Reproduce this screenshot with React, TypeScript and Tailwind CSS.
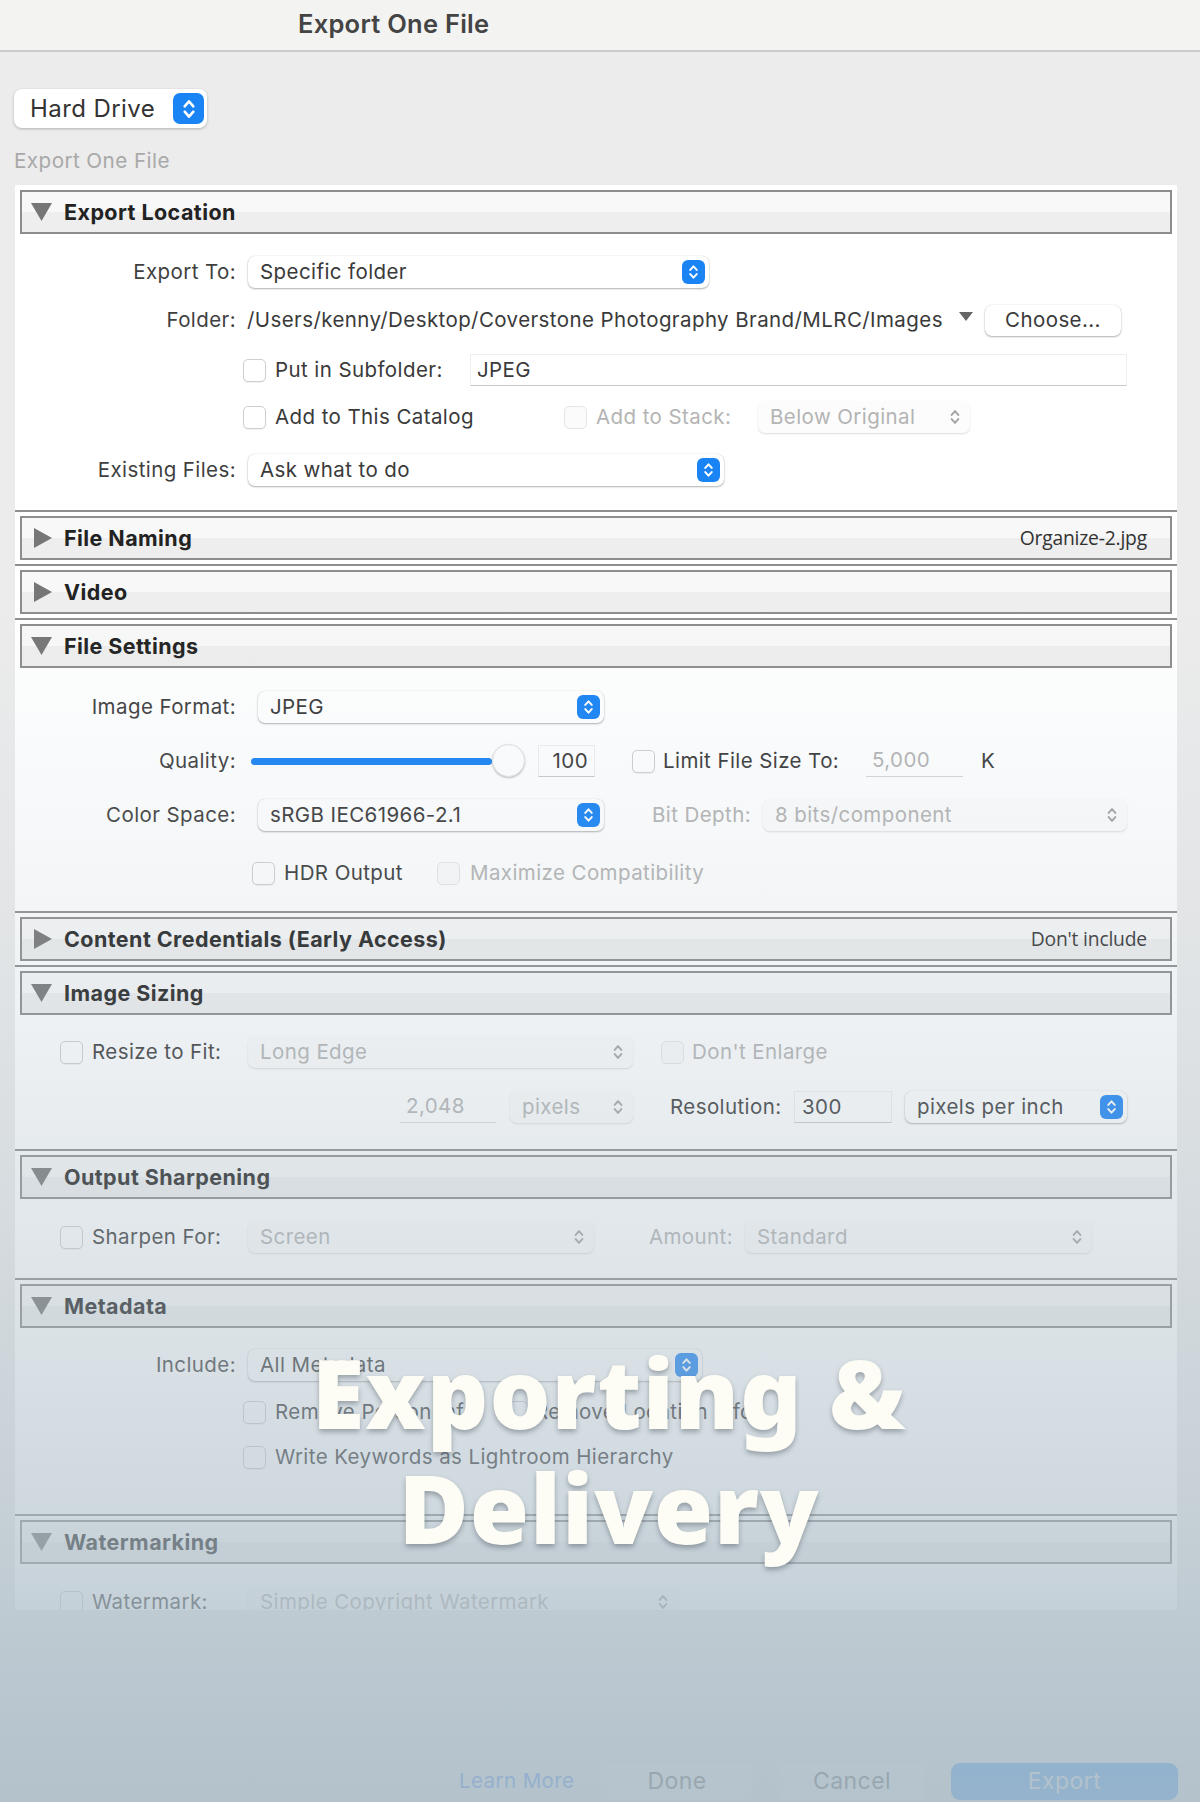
import type { ReactNode } from 'react';

const ui = "font-['Inter','Liberation_Sans',sans-serif]";

function Updown({ className }: { className: string }) {
  return (
    <svg viewBox="0 0 16 24" fill="none" stroke="currentColor" strokeWidth="2.4" strokeLinecap="round" strokeLinejoin="round" className={className}>
      <path d="M4 9.5 8 5l4 4.5" />
      <path d="M4 14.5 8 19l4-4.5" />
    </svg>
  );
}

function Popup({ className, text, off }: { className: string; text: string; off?: boolean }) {
  return (
    <div className={`relative flex h-[32px] shrink-0 items-center rounded-[7px] pl-[12px] ${off ? 'bg-[#fcfcfc] text-[#b4b4b4] shadow-[0_1px_2px_rgba(0,0,0,0.14)]' : 'bg-white text-[#3a3a3a] shadow-[0_1px_2px_rgba(0,0,0,0.3),0_0_1px_rgba(0,0,0,0.2)]'} ${className}`}>
      <span className="whitespace-nowrap">{text}</span>
      {off ? (
        <Updown className="absolute right-[8px] top-[6px] h-[20px] w-[14px] text-[#a4a4a4]" />
      ) : (
        <span className="absolute right-[4px] top-[4px] flex h-[24px] w-[23px] items-center justify-center rounded-[6px] bg-[#1a84f5] text-white">
          <Updown className="h-[20px] w-[13px]" />
        </span>
      )}
    </div>
  );
}

function Check({ className = '', off }: { className?: string; off?: boolean }) {
  return <span className={`block h-[23px] w-[23px] shrink-0 rounded-[5px] border ${off ? 'border-[#e6e6e6] bg-[#fbfbfb]' : 'border-[#cfcfcf] bg-white shadow-[0_1px_1px_rgba(0,0,0,0.06)]'} ${className}`} />;
}

function Label({ className, children }: { className: string; children: ReactNode }) {
  return <span className={`block shrink-0 whitespace-nowrap text-right text-[#3f3f3f] ${className}`}>{children}</span>;
}

function Header({ open, title, note }: { open?: boolean; title: string; note?: string }) {
  return (
    <div className="mx-[5px] flex h-[44px] items-center justify-between border-2 border-[#8d8d8d] bg-[linear-gradient(#f8f8f8_50%,#eeeeee_50%)] pr-[23px]">
      <div className="flex items-center">
        {open ? (
          <svg viewBox="0 0 21 18" className="ml-[9px] h-[18px] w-[21px] fill-[#767676]"><path d="M0 0h21L10.5 18z" /></svg>
        ) : (
          <svg viewBox="0 0 18 20" className="ml-[12px] h-[20px] w-[18px] fill-[#767676]"><path d="M0 0l18 10L0 20z" /></svg>
        )}
        <span className="ml-[12px] text-[21.5px] font-bold tracking-[0.02em] text-[#222]">{title}</span>
      </div>
      {note && <span className="font-['Open_Sans',sans-serif] text-[19.3px] tracking-[-0.01em] text-[#333]">{note}</span>}
    </div>
  );
}

function Sep({ className = '' }: { className?: string }) {
  return <div className={`mb-[4px] h-[2px] bg-[#8f8f8f] ${className}`} />;
}

export default function App() {
  return (
    <div className={`relative flex h-[1802px] w-[1200px] flex-col overflow-hidden bg-[#ececec] text-[20.5px] tracking-[0.02em] ${ui}`}>
      <div className="h-[52px] shrink-0 border-b-2 border-[#cbcbcb] bg-[#f3f3f2] pl-[298px] pt-[9px] text-[25.5px] font-semibold leading-[30px] tracking-[0.01em] text-[#444]">
        Export One File
      </div>

      <div className="ml-[14px] mt-[37px] flex h-[39px] w-[193px] items-center justify-between rounded-[8px] bg-white pl-[16px] pr-[3px] text-[24px] text-[#333] shadow-[0_1px_3px_rgba(0,0,0,0.25)]">
        <span>Hard Drive</span>
        <span className="flex h-[31px] w-[31px] items-center justify-center rounded-[7px] bg-[#1a84f5] text-white">
          <Updown className="h-[26px] w-[18px]" />
        </span>
      </div>

      <div className="ml-[14px] mt-[20px] h-[26px] text-[20.7px] leading-[26px] text-[#a9a9a9]">Export One File</div>

      <div className="ml-[15px] mt-[11px] h-[1425px] w-[1162px] shrink-0 overflow-hidden bg-white pt-[5px]">
        {/* Export Location */}
        <Header open title="Export Location" />
        <div className="mt-[22px] flex h-[32px] items-center">
          <Label className="w-[221px]">Export To:</Label>
          <Popup className="ml-[12px] w-[461px]" text="Specific folder" />
        </div>
        <div className="mt-[16px] flex h-[32px] items-center">
          <Label className="w-[221px]">Folder:</Label>
          <span className="ml-[11px] w-[694px] shrink-0 whitespace-nowrap text-[#3a3a3a]">/Users/kenny/Desktop/Coverstone Photography Brand/MLRC/Images</span>
          <svg viewBox="0 0 14 9" className="mb-[8px] ml-[18px] h-[9px] w-[14px] fill-[#666]"><path d="M0 0h14L7 9z" /></svg>
          <div className="ml-[12px] flex h-[31px] w-[136px] items-center justify-center rounded-[7px] bg-white text-[#3a3a3a] shadow-[0_1px_2px_rgba(0,0,0,0.3),0_0_1px_rgba(0,0,0,0.2)]">Choose...</div>
        </div>
        <div className="mt-[18px] flex h-[32px] items-center">
          <Check className="ml-[228px]" />
          <span className="ml-[9px] w-[195px] shrink-0 text-[#3a3a3a]">Put in Subfolder:</span>
          <div className="flex h-[32px] w-[657px] items-center border border-[#eeeeee] border-b-[#c9c9c9] pl-[6px] text-[#3a3a3a]">JPEG</div>
        </div>
        <div className="mt-[15px] flex h-[32px] items-center">
          <Check className="ml-[228px]" />
          <span className="ml-[9px] w-[289px] shrink-0 text-[#3a3a3a]">Add to This Catalog</span>
          <Check off />
          <span className="ml-[9px] w-[162px] shrink-0 text-[#b4b4b4]">Add to Stack:</span>
          <Popup off className="w-[212px]" text="Below Original" />
        </div>
        <div className="mt-[21px] flex h-[32px] items-center">
          <Label className="w-[221px]">Existing Files:</Label>
          <Popup className="ml-[12px] w-[476px]" text="Ask what to do" />
        </div>
        <Sep className="mt-[24px]" />

        <Header title="File Naming" note="Organize-2.jpg" />
        <Sep className="mt-[4px]" />
        <Header title="Video" />
        <Sep className="mt-[4px]" />

        {/* File Settings */}
        <Header open title="File Settings" />
        <div className="mt-[23px] flex h-[32px] items-center">
          <Label className="w-[221px]">Image Format:</Label>
          <Popup className="ml-[22px] w-[346px]" text="JPEG" />
        </div>
        <div className="mt-[22px] flex h-[32px] items-center">
          <Label className="w-[221px]">Quality:</Label>
          <div className="ml-[15px] h-[7px] w-[241px] shrink-0 rounded-full bg-[#1a84f5]" />
          <div className="mt-[-2px] h-[33px] w-[33px] shrink-0 rounded-full border border-[#e2e2e2] bg-white shadow-[0_1px_2px_rgba(0,0,0,0.25)]" />
          <div className="ml-[13px] flex h-[32px] w-[57px] shrink-0 items-center justify-end border border-[#eeeeee] border-b-[#c9c9c9] pr-[6px] text-[#3a3a3a]">100</div>
          <Check className="ml-[37px]" />
          <span className="ml-[8px] w-[203px] shrink-0 text-[#3a3a3a]">Limit File Size To:</span>
          <div className="flex h-[32px] w-[97px] shrink-0 items-center border-b border-[#d6d6d6] pl-[6px] text-[#b4b4b4]">5,000</div>
          <span className="ml-[18px] text-[#3a3a3a]">K</span>
        </div>
        <div className="mt-[22px] flex h-[32px] items-center">
          <Label className="w-[221px]">Color Space:</Label>
          <Popup className="ml-[22px] w-[346px]" text="sRGB IEC61966-2.1" />
          <span className="block w-[147px] shrink-0 text-right text-[#b4b4b4]">Bit Depth:</span>
          <Popup off className="ml-[12px] w-[364px]" text="8 bits/component" />
        </div>
        <div className="mt-[26px] flex h-[32px] items-center">
          <Check className="ml-[237px]" />
          <span className="ml-[9px] w-[153px] shrink-0 text-[#3a3a3a]">HDR Output</span>
          <Check off />
          <span className="ml-[10px] text-[#b4b4b4]">Maximize Compatibility</span>
        </div>
        <Sep className="mt-[22px]" />

        <Header title="Content Credentials (Early Access)" note="Don't include" />
        <Sep className="mt-[4px]" />

        {/* Image Sizing */}
        <Header open title="Image Sizing" />
        <div className="mt-[21px] flex h-[32px] items-center">
          <Check className="ml-[45px]" />
          <span className="ml-[9px] w-[156px] shrink-0 text-[#3a3a3a]">Resize to Fit:</span>
          <Popup off className="w-[385px]" text="Long Edge" />
          <Check off className="ml-[28px]" />
          <span className="ml-[8px] text-[#b4b4b4]">Don't Enlarge</span>
        </div>
        <div className="mt-[23px] flex h-[32px] items-center">
          <div className="ml-[385px] flex h-[32px] w-[96px] shrink-0 items-center border-b border-[#dcdcdc] pl-[6px] text-[#b4b4b4]">2,048</div>
          <Popup off className="ml-[14px] w-[123px]" text="pixels" />
          <span className="ml-[37px] w-[112px] shrink-0 whitespace-nowrap text-[#3a3a3a]">Resolution:</span>
          <div className="ml-[12px] flex h-[32px] w-[98px] shrink-0 items-center border border-[#eeeeee] border-b-[#c9c9c9] pl-[7px] text-[#3a3a3a]">300</div>
          <Popup className="ml-[13px] w-[222px]" text="pixels per inch" />
        </div>
        <Sep className="mt-[26px]" />

        {/* Output Sharpening */}
        <Header open title="Output Sharpening" />
        <div className="mt-[22px] flex h-[32px] items-center">
          <Check className="ml-[45px]" />
          <span className="ml-[9px] w-[156px] shrink-0 text-[#3a3a3a]">Sharpen For:</span>
          <Popup off className="w-[346px]" text="Screen" />
          <span className="block w-[139px] shrink-0 text-right text-[#b4b4b4]">Amount:</span>
          <Popup off className="ml-[12px] w-[347px]" text="Standard" />
        </div>
        <Sep className="mt-[25px]" />

        {/* Metadata */}
        <Header open title="Metadata" />
        <div className="mt-[21px] flex h-[32px] items-center">
          <Label className="w-[221px]">Include:</Label>
          <Popup className="ml-[12px] w-[454px]" text="All Metadata" />
        </div>
        <div className="mt-[15px] flex h-[32px] items-center">
          <Check className="ml-[228px]" />
          <span className="ml-[9px] w-[230px] shrink-0 whitespace-nowrap text-[#3a3a3a]">Remove Person Info</span>
          <Check />
          <span className="ml-[7px] whitespace-nowrap text-[#3a3a3a]">Remove Location Info</span>
        </div>
        <div className="mt-[13px] flex h-[32px] items-center">
          <Check className="ml-[228px]" />
          <span className="ml-[9px] whitespace-nowrap text-[#3a3a3a]">Write Keywords as Lightroom Hierarchy</span>
        </div>
        <Sep className="mt-[41px]" />

        {/* Watermarking */}
        <Header open title="Watermarking" />
        <div className="mt-[22px] flex h-[32px] items-center">
          <Check className="ml-[45px]" />
          <span className="ml-[9px] w-[156px] shrink-0 text-[#3a3a3a]">Watermark:</span>
          <Popup off className="w-[430px]" text="Simple Copyright Watermark" />
        </div>
      </div>

      {/* footer buttons */}
      <div className="mt-[153px] flex h-[37px] shrink-0 items-center pl-[459px] text-[23px]">
        <span className="w-[142px] shrink-0 text-[20.5px] text-[#1a6ff0]">Learn More</span>
        <div className="flex h-[37px] w-[152px] shrink-0 items-center justify-center rounded-[7px] bg-[#f4f4f4] text-[#333]">Done</div>
        <div className="ml-[25px] flex h-[37px] w-[148px] shrink-0 items-center justify-center rounded-[7px] bg-[#f4f4f4] text-[#333]">Cancel</div>
        <div className="ml-[25px] flex h-[37px] w-[227px] shrink-0 items-center justify-center rounded-[9px] bg-[#1a84f0] text-[#dfe7f0]">Export</div>
      </div>

      {/* slate fade over the dialog */}
      <div className="pointer-events-none absolute inset-0 bg-[linear-gradient(rgba(170,187,198,0)_33%,rgba(170,187,198,0.18)_55%,rgba(170,187,198,0.4)_72%,rgba(170,187,198,0.56)_83%,rgba(170,187,198,0.68)_89%,rgba(170,187,198,0.85)_99%)]" />

      {/* video title */}
      <div className="absolute left-[9px] top-[1334px] w-[1200px] text-center font-['Noto_Sans',sans-serif] text-[96px] font-black leading-[115px] tracking-[0.01em] text-[#fdfdf5] [text-shadow:0_3px_5px_rgba(40,50,60,0.35)]">
        Exporting &amp;
        <br />
        Delivery
      </div>
    </div>
  );
}
